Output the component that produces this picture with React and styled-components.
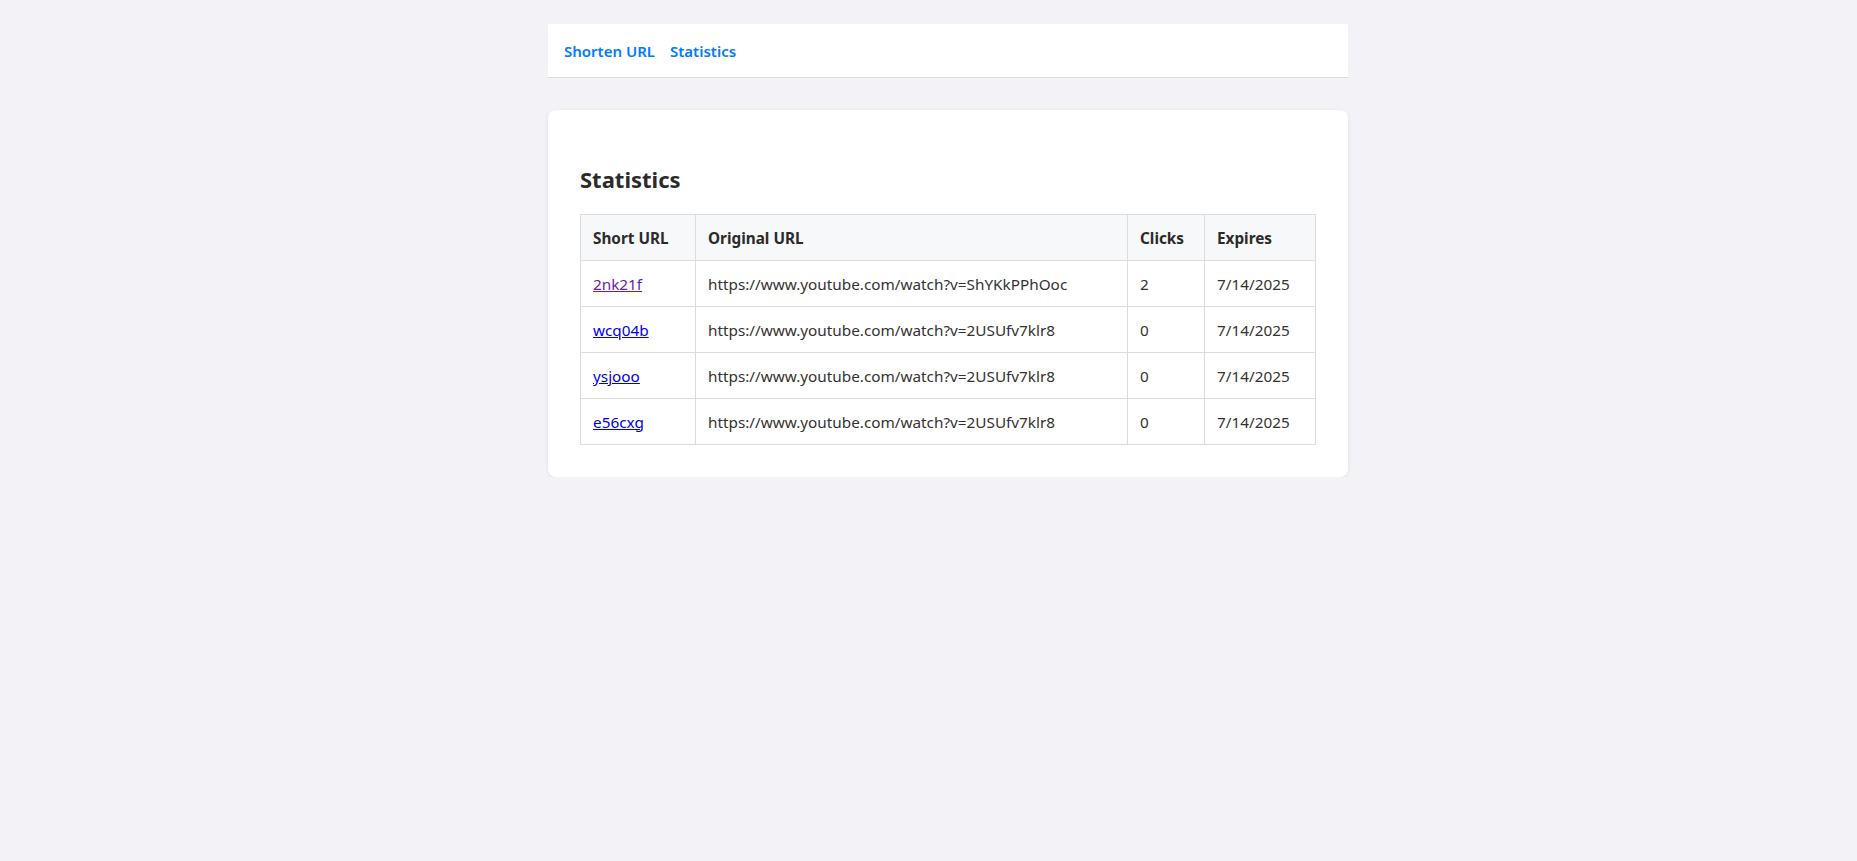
import React from 'react'
import styled, { createGlobalStyle } from 'styled-components'

const GlobalStyle = createGlobalStyle`
  body {
    margin: 0;
    background: #f3f3f7;
    font-family: "Noto Sans", "Open Sans", sans-serif;
    color: #333;
  }
`

const Page = styled.div`
  padding: 24px 0 0 39px;
`

const Container = styled.div`
  width: 800px;
  margin: 0 auto;
`

const Nav = styled.nav`
  display: flex;
  align-items: center;
  gap: 15px;
  height: 53px;
  padding: 0 16px;
  background: #fff;
  border-bottom: 1px solid #dcdce0;
`

const NavLink = styled.a`
  color: #007bff;
  font-size: 15px;
  font-weight: 600;
  text-decoration: none;
`

const Card = styled.section`
  margin-top: 32px;
  padding: 32px;
  background: #fff;
  border-radius: 8px;
  box-shadow: 0 1px 4px rgba(0, 0, 0, 0.08);
`

const Title = styled.h2`
  margin: 22px 0 20px;
  font-size: 22px;
  font-weight: 700;
  color: #2b2b2b;
`

const Table = styled.table`
  width: 100%;
  table-layout: fixed;
  border-collapse: collapse;
  font-size: 15.3px;
`

const Cell = styled.td`
  height: 45px;
  padding: 0 12px;
  border: 1px solid #dcdcdc;
  text-align: left;
  white-space: nowrap;
  overflow: hidden;
  width: ${({ $w }) => $w || 'auto'};
`

const Head = styled(Cell).attrs({ as: 'th' })`
  background: #f7f8fa;
  font-weight: 700;
  color: #2b2b2b;
`

const ShortLink = styled.a`
  color: ${({ $visited }) => ($visited ? '#681da8' : '#0000ee')};
  text-decoration: underline;
`

const rows = [
  { code: '2nk21f', url: 'https://www.youtube.com/watch?v=ShYKkPPhOoc', clicks: 2, visited: true },
  { code: 'wcq04b', url: 'https://www.youtube.com/watch?v=2USUfv7klr8', clicks: 0 },
  { code: 'ysjooo', url: 'https://www.youtube.com/watch?v=2USUfv7klr8', clicks: 0 },
  { code: 'e56cxg', url: 'https://www.youtube.com/watch?v=2USUfv7klr8', clicks: 0 }
]

export default function App () {
  return (
    <Page>
      <GlobalStyle />
      <Container>
        <Nav>
          <NavLink href="#">Shorten URL</NavLink>
          <NavLink href="#">Statistics</NavLink>
        </Nav>
        <Card>
          <Title>Statistics</Title>
          <Table>
            <thead>
              <tr>
                <Head $w="90px">Short URL</Head>
                <Head>Original URL</Head>
                <Head $w="52px">Clicks</Head>
                <Head $w="86px">Expires</Head>
              </tr>
            </thead>
            <tbody>
              {rows.map(row => (
                <tr key={row.code}>
                  <Cell><ShortLink href="#" $visited={row.visited}>{row.code}</ShortLink></Cell>
                  <Cell>{row.url}</Cell>
                  <Cell>{row.clicks}</Cell>
                  <Cell>7/14/2025</Cell>
                </tr>
              ))}
            </tbody>
          </Table>
        </Card>
      </Container>
    </Page>
  )
}
